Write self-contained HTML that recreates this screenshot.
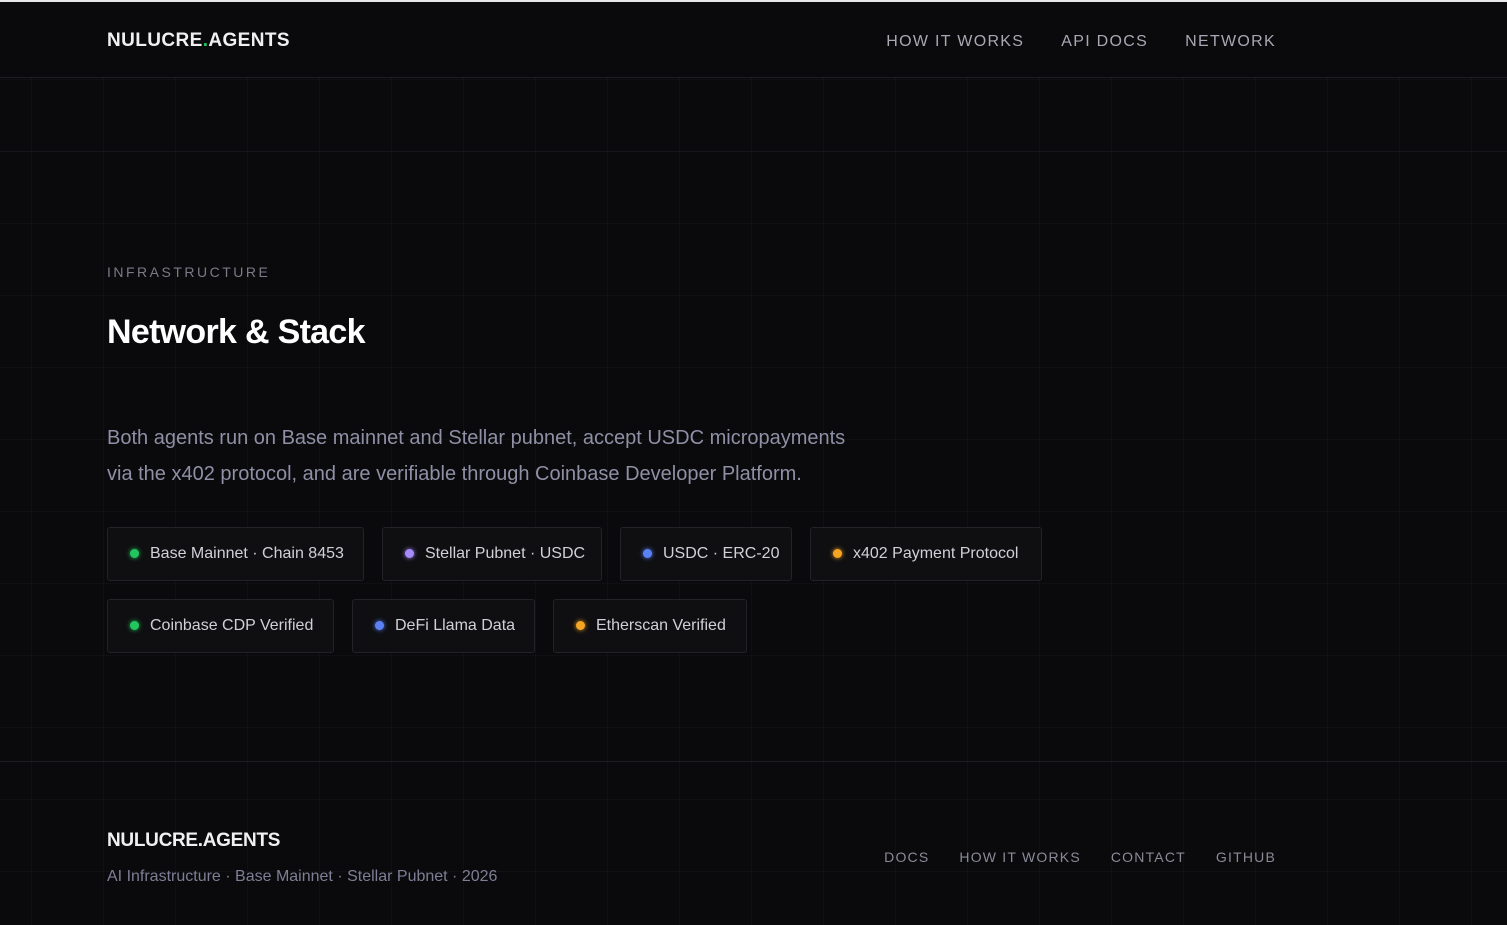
<!DOCTYPE html>
<html><head><style>
*{margin:0;padding:0;box-sizing:border-box}
body{width:1507px;height:925px;overflow:hidden;background:#0a0a0c;font-family:"Liberation Sans",sans-serif;position:relative;
background-image:linear-gradient(rgba(255,255,255,0.025) 1px,transparent 1px),linear-gradient(90deg,rgba(255,255,255,0.025) 1px,transparent 1px);
background-size:72px 72px;background-position:31px 7px}
.top{position:absolute;top:0;left:0;right:0;height:2px;background:#e8e8e8}
header{position:absolute;top:2px;left:0;right:0;height:76px;border-bottom:1px solid #1e1e22;background:#0a0a0c}
.logo{position:absolute;left:107px;top:28px;color:#f0f0f2;font-weight:bold;font-size:19px;letter-spacing:0.4px}
.logo span{color:#22c55e}
nav{position:absolute;right:231px;top:31px;display:flex;gap:37px}
nav a{color:#a8a8b4;font-size:16px;letter-spacing:1.3px;text-decoration:none}
.line151{position:absolute;top:151px;left:0;right:0;height:1px;background:#17171b}
.eyebrow{position:absolute;left:107px;top:264px;color:#7a7a88;font-size:14px;letter-spacing:2.5px}
h1{position:absolute;left:107px;top:313px;color:#fff;font-size:34px;font-weight:bold;letter-spacing:-0.7px}
p.d{position:absolute;left:107px;top:420px;color:#8f8fa6;font-size:20px;line-height:36px;width:765px}
.tag{position:absolute;height:54px;border:1px solid #222228;border-radius:3px;background:#0f0f12;color:#d0d0d8;font-size:16px;display:flex;align-items:center;padding-left:42px}
.tag i{position:absolute;left:22px;top:21px;width:9px;height:9px;border-radius:50%}
.g{background:#22c55e;box-shadow:0 0 5px #22c55e}.p{background:#a78bfa;box-shadow:0 0 5px #a78bfa}.b{background:#5b82f5;box-shadow:0 0 5px #5b82f5}.o{background:#f5a524;box-shadow:0 0 5px #f5a524}
footer{position:absolute;top:761px;left:0;right:0;bottom:0;border-top:1px solid #1e1e22}
.fl{position:absolute;left:107px;top:68px;color:#f0f0f2;font-weight:bold;font-size:19px;letter-spacing:-0.3px}
.fs{position:absolute;left:107px;top:106px;color:#7e7e96;font-size:16px}
.fn{position:absolute;right:231px;top:87px;display:flex;gap:30px}
.fn a{color:#8a8a98;font-size:14px;letter-spacing:1.2px}
</style></head><body>
<div class="top"></div>
<header><div class="logo">NULUCRE<span>.</span>AGENTS</div>
<nav><a>HOW IT WORKS</a><a>API DOCS</a><a>NETWORK</a></nav></header>
<div class="line151"></div>
<div class="eyebrow">INFRASTRUCTURE</div>
<h1>Network &amp; Stack</h1>
<p class="d">Both agents run on Base mainnet and Stellar pubnet, accept USDC micropayments via the x402 protocol, and are verifiable through Coinbase Developer Platform.</p>
<div class="tag" style="left:107px;top:527px;width:257px"><i class="g"></i>Base Mainnet · Chain 8453</div>
<div class="tag" style="left:382px;top:527px;width:220px"><i class="p"></i>Stellar Pubnet · USDC</div>
<div class="tag" style="left:620px;top:527px;width:172px"><i class="b"></i>USDC · ERC-20</div>
<div class="tag" style="left:810px;top:527px;width:232px"><i class="o"></i>x402 Payment Protocol</div>
<div class="tag" style="left:107px;top:599px;width:227px"><i class="g"></i>Coinbase CDP Verified</div>
<div class="tag" style="left:352px;top:599px;width:183px"><i class="b"></i>DeFi Llama Data</div>
<div class="tag" style="left:553px;top:599px;width:194px"><i class="o"></i>Etherscan Verified</div>
<footer><div class="fl">NULUCRE.AGENTS</div>
<div class="fs">AI Infrastructure · Base Mainnet · Stellar Pubnet · 2026</div>
<div class="fn"><a>DOCS</a><a>HOW IT WORKS</a><a>CONTACT</a><a>GITHUB</a></div></footer>
</body></html>
